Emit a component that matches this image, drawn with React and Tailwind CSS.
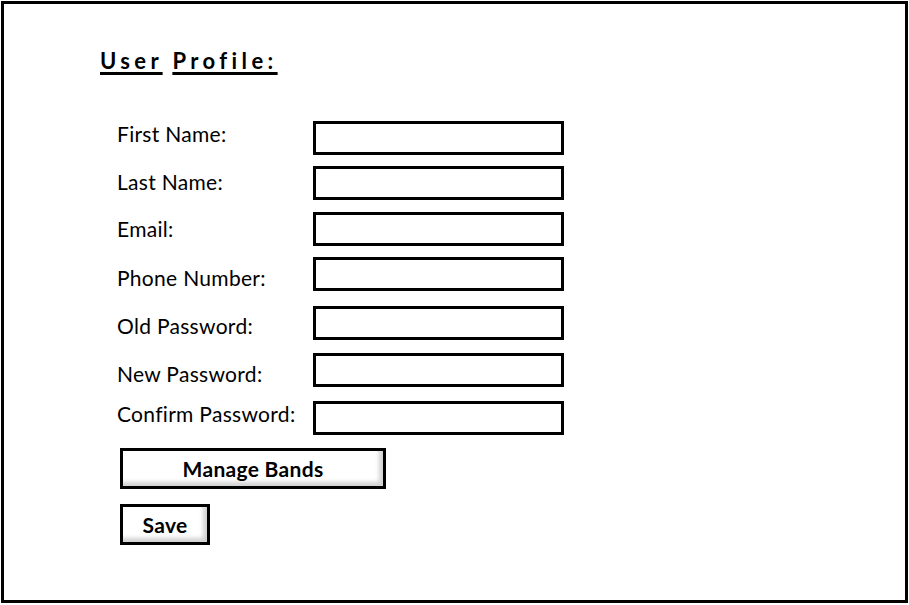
export default function App() {
  const rows = [
    { label: "First Name:", lt: 1, it: 0 },
    { label: "Last Name:", lt: 4, it: 11 },
    { label: "Email:", lt: 5, it: 12 },
    { label: "Phone Number:", lt: 9, it: 11 },
    { label: "Old Password:", lt: 8, it: 15 },
    { label: "New Password:", lt: 9, it: 13 },
    { label: "Confirm Password:", lt: 1, it: 14 },
  ];
  return (
    <div className="w-[909px] h-[605px] bg-white p-px" style={{ fontFamily: "Lato, 'Open Sans', sans-serif" }}>
      <div className="w-[907px] h-[602px] border-[3px] border-black pl-[96px] pt-[43px]">
        <div className="text-[22px] font-bold tracking-[4.4px] text-black leading-[28px]">
          <span className="underline underline-offset-[3px] decoration-[3px]">User</span>{" "}
          <span className="underline underline-offset-[3px] decoration-[3px]">Profile:</span>
        </div>
        <div className="mt-[46px] ml-[17px]">
          {rows.map((r, i) => (
            <div key={i} className="flex h-[34px]" style={{ marginTop: r.it }}>
              <div className="w-[196px] h-[34px] text-[21px] tracking-[0.3px] text-black leading-[24px]" style={{ paddingTop: r.lt }}>
                {r.label}
              </div>
              <div className="w-[251px] h-[34px] border-[3px] border-black bg-white" />
            </div>
          ))}
        </div>
        <div className="ml-[20px] mt-[13px] flex flex-col gap-[15px] items-start">
          <button className="w-[266px] h-[41px] border-[3px] border-black bg-white text-[21px] tracking-[0.3px] font-bold text-black shadow-[inset_-4px_-4px_4px_rgba(0,0,0,0.18)]">
            Manage Bands
          </button>
          <button className="w-[90px] h-[41px] border-[3px] border-black bg-white text-[21px] tracking-[0.3px] font-bold text-black shadow-[inset_-4px_-4px_4px_rgba(0,0,0,0.18)]">
            Save
          </button>
        </div>
      </div>
    </div>
  );
}
